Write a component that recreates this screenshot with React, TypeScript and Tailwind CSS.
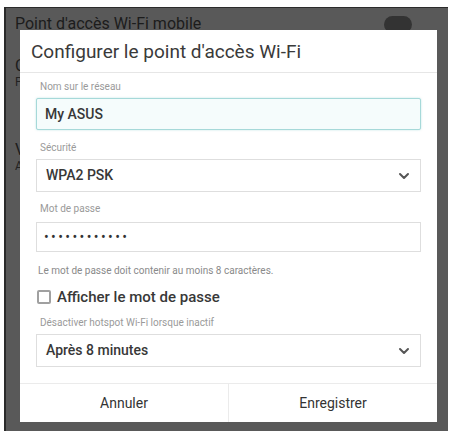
import { ChevronDown } from "lucide-react";

function Label({ children, className = "" }: { children: React.ReactNode; className?: string }) {
	return <div className={`pl-[4px] text-[10px] leading-[12px] text-[#9a9a9a] ${className}`}>{children}</div>;
}

function Select({ value, className = "" }: { value: string; className?: string }) {
	return (
		<div className={`flex h-[33px] items-center justify-between border border-[#dedede] bg-white pl-[9px] pr-[8px] ${className}`}>
			<span className="text-[14px] font-medium text-[#383838]">{value}</span>
			<ChevronDown className="h-[16px] w-[16px] text-[#555]" strokeWidth={3} />
		</div>
	);
}

export default function App() {
	return (
		<div className="flex h-[431px] w-[451px] bg-white pl-[4px] pr-[3px] pt-[7px] font-['Roboto','Liberation_Sans',sans-serif]">
			<div className="relative flex-1 overflow-hidden border-l-2 border-t border-[#2b2b2b] bg-[#595959]">
				{/* page behind the dialog, dimmed */}
				<div className="flex items-center justify-between pl-[9px] pr-[36px] pt-[7px]">
					<span className="text-[16px] leading-[18px] text-[#1c1c1c]">Point d'accès Wi-Fi mobile</span>
					<div className="h-[17px] w-[28px] rounded-full bg-[#333]" />
				</div>
				<div className="pl-[9px] pt-[24px]">
					<div className="text-[16px] leading-[18px] text-[#1c1c1c]">C</div>
					<div className="text-[12px] leading-[14px] text-[#222]">P</div>
					<div className="mt-[52px] text-[16px] leading-[18px] text-[#1c1c1c]">V</div>
					<div className="text-[12px] leading-[14px] text-[#222]">A</div>
				</div>

				{/* dialog */}
				<div className="absolute left-[14px] top-[22px] flex h-[392px] w-[417px] flex-col bg-white">
					<div className="flex h-[43px] items-center border-b border-[#e6e6e6] pl-[11px] pt-[2px]">
						<span className="text-[19px] text-[#3a3a3a]">Configurer le point d'accès Wi-Fi</span>
					</div>

					<div className="flex flex-col px-[16px]">
						<Label className="mt-[8px]">Nom sur le réseau</Label>
						<div className="mt-[5px] flex h-[32px] items-center rounded-[2px] border border-[#a6d9d9] bg-[#f5fcfc] pl-[8px] shadow-[0_0_2px_rgba(120,200,200,0.5)]">
							<span className="text-[14px] font-medium text-[#383838]">My ASUS</span>
						</div>

						<Label className="mt-[12px]">Sécurité</Label>
						<Select value="WPA2 PSK" className="mt-[5px]" />

						<Label className="mt-[11px]">Mot de passe</Label>
						<div className="mt-[7px] flex h-[30px] items-center border border-[#dedede] pl-[7px]">
							<span className="text-[14px] tracking-[2.4px] text-[#333]">••••••••••••</span>
						</div>

						<div className="mt-[13px] pl-[2px] text-[10px] leading-[12px] text-[#8a8a8a]">
							Le mot de passe doit contenir au moins 8 caractères.
						</div>

						<div className="mt-[10px] flex h-[20px] items-center gap-[6px] pl-[1px]">
							<div className="h-[14px] w-[14px] rounded-[2px] border-2 border-[#a0a0a0]" />
							<span className="text-[15px] font-medium text-[#383838]">Afficher le mot de passe</span>
						</div>

						<Label className="mt-[10px]">Désactiver hotspot Wi-Fi lorsque inactif</Label>
						<Select value="Après 8 minutes" className="mt-[5px]" />
					</div>

					<div className="mt-auto flex h-[39px] border-t border-[#ebebeb]">
						<button className="flex flex-1 items-center justify-center border-r border-[#ebebeb] text-[14px] text-[#333]">
							Annuler
						</button>
						<button className="flex flex-1 items-center justify-center text-[14px] text-[#333]">
							Enregistrer
						</button>
					</div>
				</div>
			</div>
		</div>
	);
}
